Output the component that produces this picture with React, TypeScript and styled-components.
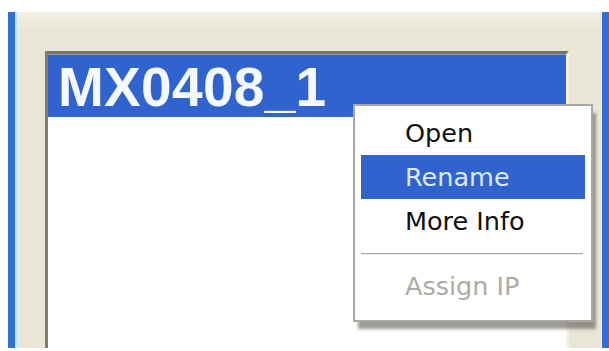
import React from 'react';
import styled, { createGlobalStyle } from 'styled-components';

const GlobalStyle = createGlobalStyle`
    html, body {
        margin: 0;
        padding: 0;
        background: #FFFFFF;
    }

    body {
        width: 609px;
        height: 351px;
        overflow: hidden;
        font-family: Tahoma, "DejaVu Sans", sans-serif;
    }
`;

type MenuItem = {
    label: string;
    active?: boolean;
    disabled?: boolean;
    separatorBefore?: boolean;
};

const menuItems: MenuItem[] = [
    { label: 'Open' },
    { label: 'Rename', active: true },
    { label: 'More Info' },
    { label: 'Assign IP', disabled: true, separatorBefore: true },
];

export default function App() {
    return (
        <>
            <GlobalStyle />
            <Page>
                <Frame>
                    <ListBox>
                        <SelectedRow>MX0408_1</SelectedRow>

                        <ContextMenu>
                            {
                                menuItems.map((item) => (
                                    <React.Fragment key={item.label}>
                                        { item.separatorBefore && <MenuSeparator /> }
                                        <MenuRow active={item.active} disabled={item.disabled}>
                                            { item.label }
                                        </MenuRow>
                                    </React.Fragment>
                                ))
                            }
                        </ContextMenu>
                    </ListBox>
                </Frame>
            </Page>
        </>
    );
}

const Page = styled.div`
    padding: 12px 0 3px 8px;
    height: 351px;
    box-sizing: border-box;
    display: flex;
`;

const Frame = styled.div`
    flex: 1;
    display: flex;
    flex-direction: column;
    padding: 39px 0 0 30px;
    background: linear-gradient(#F2F0E6, #E9E6D6 20px);
    border-left: 7px solid #2F6FD6;
    border-right: 7px solid #2F6FD6;
    box-shadow: inset 2px 0 0 #BFE6F4, inset -3px 0 0 #F3E7DA;
`;

const ListBox = styled.div`
    position: relative;
    flex: 1;
    width: 518px;
    background: #FFFFFF;
    border-top: 3px solid #76736C;
    border-left: 3px solid #807D77;
    border-right: 3px solid #F4F2EA;
    box-shadow: inset 0 1px 0 #9A9890;
    padding-top: 1px;
`;

const SelectedRow = styled.div`
    height: 62px;
    background: #3163CE;
    color: #F4F8FF;
    font-family: Arial, "Liberation Sans", sans-serif;
    font-weight: bold;
    font-size: 55px;
    line-height: 64px;
    padding-left: 10px;
    letter-spacing: 0.3px;
    overflow: visible;
`;

const ContextMenu = styled.div`
    position: absolute;
    left: 305px;
    top: 50px;
    width: 224px;
    padding: 5px 6px 12px 6px;
    background: #FFFFFF;
    border: 2px solid #A9A7A3;
    box-shadow: 4px 8px 3px -1px rgba(90, 88, 84, 0.6);
`;

const MenuRow = styled.div<{ active?: boolean; disabled?: boolean }>`
    height: 44px;
    line-height: 44px;
    padding-left: 44px;
    font-size: 25.5px;
    white-space: nowrap;
    background: ${(props) => (props.active ? '#3163CE' : 'transparent')};
    color: ${(props) => (props.active ? '#DCEAFF' : props.disabled ? '#ADABA4' : '#111111')};
`;

const MenuSeparator = styled.div`
    height: 2px;
    margin: 10px 2px 9px 0;
    background: #A8A6A0;
    border-bottom: 1px solid #F0F0F0;
    box-sizing: border-box;
`;
